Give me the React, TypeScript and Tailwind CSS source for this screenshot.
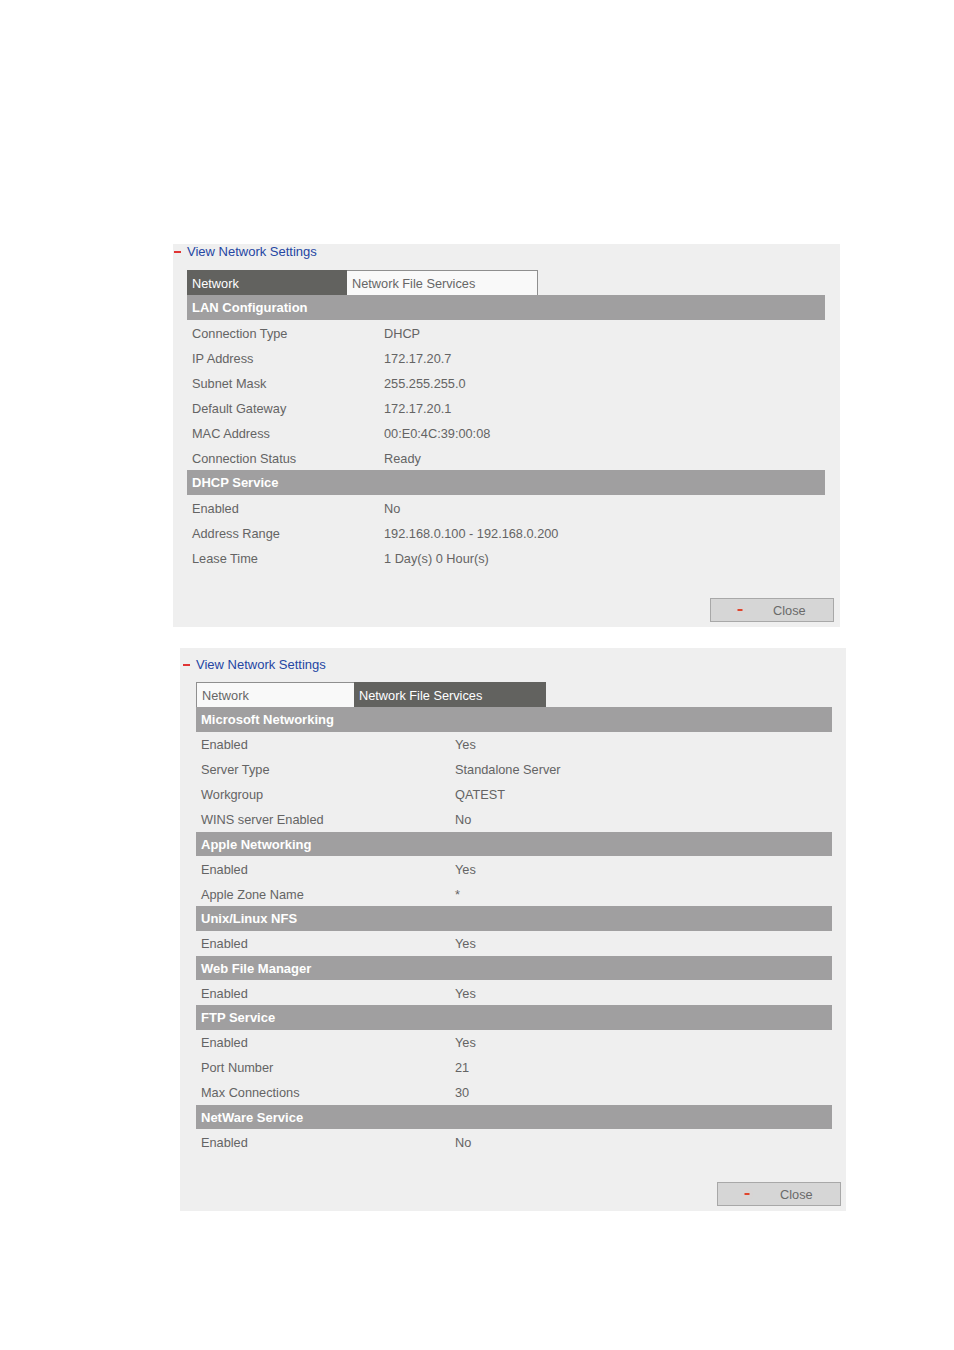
import React from "react";

type Row = { kind: "head"; label: string } | { kind: "row"; label: string; value: string };

const head = (label: string): Row => ({ kind: "head", label });
const row = (label: string, value: string): Row => ({ kind: "row", label, value });

const networkRows: Row[] = [
  head("LAN Configuration"),
  row("Connection Type", "DHCP"),
  row("IP Address", "172.17.20.7"),
  row("Subnet Mask", "255.255.255.0"),
  row("Default Gateway", "172.17.20.1"),
  row("MAC Address", "00:E0:4C:39:00:08"),
  row("Connection Status", "Ready"),
  head("DHCP Service"),
  row("Enabled", "No"),
  row("Address Range", "192.168.0.100 - 192.168.0.200"),
  row("Lease Time", "1 Day(s) 0 Hour(s)"),
];

const fileServiceRows: Row[] = [
  head("Microsoft Networking"),
  row("Enabled", "Yes"),
  row("Server Type", "Standalone Server"),
  row("Workgroup", "QATEST"),
  row("WINS server Enabled", "No"),
  head("Apple Networking"),
  row("Enabled", "Yes"),
  row("Apple Zone Name", "*"),
  head("Unix/Linux NFS"),
  row("Enabled", "Yes"),
  head("Web File Manager"),
  row("Enabled", "Yes"),
  head("FTP Service"),
  row("Enabled", "Yes"),
  row("Port Number", "21"),
  row("Max Connections", "30"),
  head("NetWare Service"),
  row("Enabled", "No"),
];

const CloseButton = () => (
  <button className="flex h-[24px] w-[124px] items-center border border-[#a8a8a8] bg-[#d6d6d6] pt-[2px] text-[12.75px] text-[#6a6a6a]">
    <svg width="14" height="14" viewBox="0 0 14 14" className="ml-[22px] -mt-[2px]">
      <circle cx="7" cy="7" r="6" fill="#d9d4d4" opacity="0.6" />
      <rect x="4.5" y="6" width="5" height="2" fill="#e0452c" />
    </svg>
    <span className="ml-[26px]">Close</span>
  </button>
);

const Panel = ({
  active,
  rows,
  valueCol,
  className,
  titleClass,
  dashClass,
  headH,
}: {
  active: 0 | 1;
  rows: Row[];
  valueCol: string;
  className: string;
  titleClass: string;
  dashClass: string;
  headH: string;
}) => (
  <div className={`flex flex-col bg-[#efefef] ${className}`}>
    <div className={`flex items-center ${titleClass}`}>
      <span className={`w-[7px] h-[1.5px] bg-[#e03434] ${dashClass}`} />
      <span className="ml-[6px] text-[13px] text-[#2546a3]">View Network Settings</span>
    </div>
    <div className="flex h-[25px] text-[12.75px]">
      {["Network", "Network File Services"].map((t, i) =>
        i === active ? (
          <div
            key={t}
            className={`flex items-center bg-[#62625f] pl-[5px] pt-[2px] text-white ${i === 0 ? "w-[160px]" : "w-[192px]"}`}
          >
            {t}
          </div>
        ) : (
          <div
            key={t}
            className={`flex items-center border-t border-[#8f8f8f] bg-[#f9f9f9] pl-[5px] pt-[1px] text-[#666] ${
              i === 0 ? "w-[158px] border-l" : "w-[191px] border-r"
            }`}
          >
            {t}
          </div>
        )
      )}
    </div>
    <div className="flex flex-col">
      {rows.map((r, i) =>
        r.kind === "head" ? (
          <div
            key={i}
            className={`flex items-center bg-[#a09fa0] pl-[5px] pt-[1px] text-[13px] font-bold text-white ${headH}`}
          >
            {r.label}
          </div>
        ) : (
          <div key={i} className="flex h-[25px] items-center pt-[2px] text-[12.75px] text-[#646464]">
            <span className={`pl-[5px] ${valueCol}`}>{r.label}</span>
            <span>{r.value}</span>
          </div>
        )
      )}
    </div>
    <div className="mt-[28px] flex justify-end">
      <CloseButton />
    </div>
  </div>
);

export default function App() {
  return (
    <div
      className="min-h-[1350px] bg-white pt-[244px]"
      style={{ fontFamily: '"Liberation Sans", Arial, sans-serif' }}
    >
      <Panel
        active={0}
        rows={networkRows}
        valueCol="w-[197px]"
        className="ml-[173px] w-[667px] pl-[14px] pr-[6px] pb-[5px]"
        titleClass="-ml-[14px] h-[26px] pb-[10px]"
        dashClass="ml-[1px]"
        headH="h-[25px] mr-[9px]"
      />
      <Panel
        active={1}
        rows={fileServiceRows}
        valueCol="w-[259px]"
        className="ml-[180px] mt-[21px] w-[666px] pl-[16px] pr-[5px] pb-[5px]"
        titleClass="-ml-[16px] h-[34px]"
        dashClass="ml-[3px]"
        headH="h-[24.5px] mr-[9px]"
      />
    </div>
  );
}
